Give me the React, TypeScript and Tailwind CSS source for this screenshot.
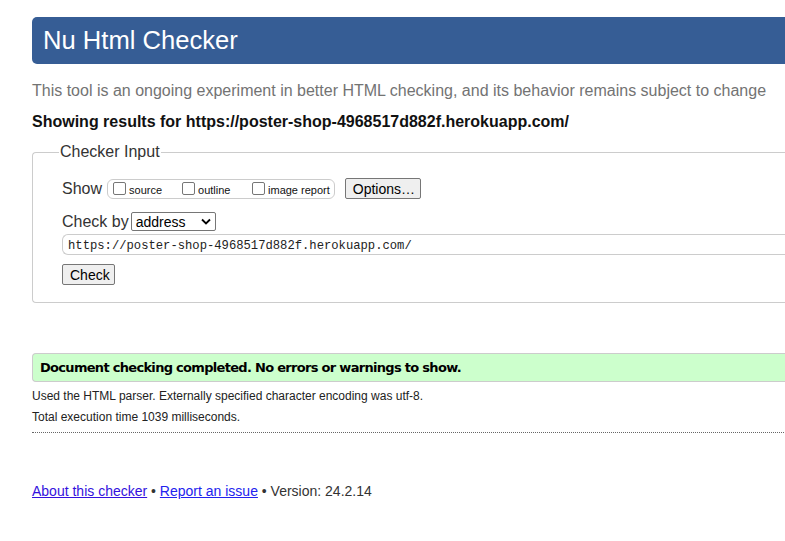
import React from 'react';

const FieldCheck: React.FC<{ label: string; className?: string }> = ({ label, className }) => (
  <label className={`flex items-center ${className ?? ''}`}>
    <span className="w-[13px] h-[13px] border border-[#767676] rounded-[2px] bg-white mr-[3px]" />
    <span className="text-[11px] leading-none mt-[3px]">{label}</span>
  </label>
);

const GrayButton: React.FC<{ children: React.ReactNode; className?: string }> = ({ children, className }) => (
  <button
    className={`h-[21px] px-[7px] border border-[#767676] rounded-[2px] bg-[#efefef] text-[14px] leading-none text-black ${className ?? ''}`}
  >
    {children}
  </button>
);

export default function App() {
  const url = 'https://poster-shop-4968517d882f.herokuapp.com/';

  return (
    <div className="w-[785px] h-[541px] overflow-hidden bg-white font-['Liberation_Sans',Arial,sans-serif] text-[#111]">
      <div className="w-[800px] pl-[32px] pt-[17px]">
        {/* Title bar */}
        <div className="h-[47px] rounded-l-[5px] bg-[#365d95] pl-[11px] flex items-center">
          <h1 className="text-white text-[25.6px] leading-none">Nu Html Checker</h1>
        </div>

        <p className="mt-[18px] text-[16px] leading-[18px] text-[#737373]">
          This tool is an ongoing experiment in better HTML checking, and its behavior remains subject to change
        </p>
        <p className="mt-[13px] text-[16px] leading-[18px] font-bold text-[#111]">Showing results for {url}</p>

        {/* Checker input */}
        <fieldset className="mt-[12px] border border-[#cccccc] rounded-l-[4px] border-r-0 pl-[29px] pb-[15px]">
          <legend className="-ml-[3px] px-px text-[16px] leading-[18px] text-[#333]">Checker Input</legend>

          <div className="mt-[17px] flex items-center">
            <span className="text-[16px] leading-[18px] text-[#333] mr-[5px]">Show</span>
            <div className="flex items-center h-[20px] border border-[#cccccc] rounded-[6px] pl-[5px] pr-[4px]">
              <FieldCheck label="source" className="w-[69px]" />
              <FieldCheck label="outline" className="w-[70px]" />
              <FieldCheck label="image report" />
            </div>
            <GrayButton className="ml-[10px] w-[76px]">Options…</GrayButton>
          </div>

          <div className="mt-[13px] flex items-center">
            <span className="text-[16px] leading-[18px] text-[#333] mr-[2px]">Check by</span>
            <div className="w-[85px] h-[19px] border border-[#767676] rounded-[2px] flex items-center justify-between pl-[4px] pr-[4px] text-[14px] leading-none text-black">
              <span>address</span>
              <svg width="10" height="7" viewBox="0 0 10 7">
                <path d="M1 1.5 L5 5.5 L9 1.5" fill="none" stroke="#000" strokeWidth="1.8" />
              </svg>
            </div>
          </div>

          <div className="mt-[3px] h-[21px] border border-[#cccccc] border-r-0 rounded-l-[6px] flex items-center pl-[5px] pt-[3px] font-['Liberation_Mono','DejaVu_Sans_Mono',monospace] text-[12.2px] leading-none text-[#222]">
            {url}
          </div>

          <GrayButton className="mt-[9px] w-[53px]">Check</GrayButton>
        </fieldset>

        {/* Result */}
        <div className="mt-[50px] h-[29px] border border-[#cccccc] border-r-0 rounded-l-[4px] bg-[#ccffcc] pl-[7px] flex items-center">
          <span className="font-['DejaVu_Sans',Verdana,sans-serif] font-bold text-[13px] leading-none text-black tracking-[-0.7px]">
            Document checking completed. No errors or warnings to show.
          </span>
        </div>

        <p className="mt-[7px] text-[12px] leading-[14px] text-[#222]">
          Used the HTML parser. Externally specified character encoding was utf-8.
        </p>
        <p className="mt-[7px] text-[12px] leading-[14px] text-[#222]">Total execution time 1039 milliseconds.</p>

        <div className="mt-[8px] border-t border-dotted border-[#666]" />

        <p className="mt-[50px] text-[14px] leading-[16px] text-[#333]">
          <a href="#" className="underline text-[#3311dd]">About this checker</a>
          {' • '}
          <a href="#" className="underline text-[#2222ee]">Report an issue</a>
          {' • Version: 24.2.14'}
        </p>
      </div>
    </div>
  );
}
